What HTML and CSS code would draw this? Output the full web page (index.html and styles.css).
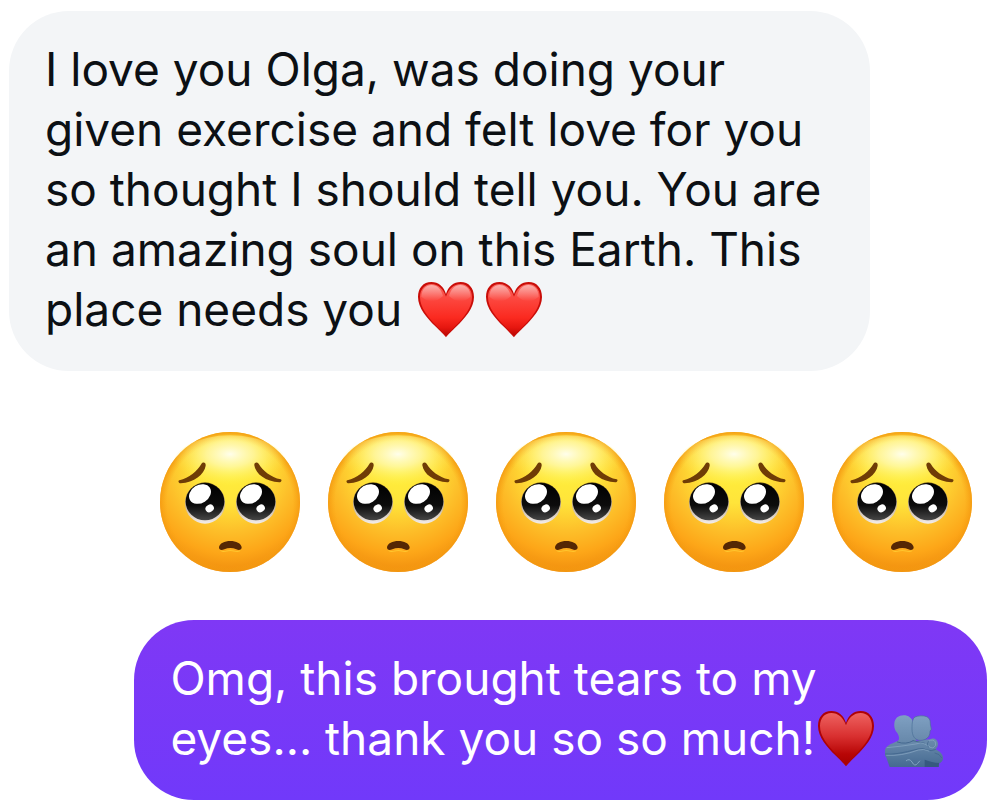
FILE: index.html
```html
<!DOCTYPE html>
<html lang="en">

<head>
    <meta charset="UTF-8">
    <meta name="viewport" content="width=device-width, initial-scale=1.0">
    <title>Chat</title>
    <link rel="stylesheet" href="styles.css">
</head>

<body>
    <!-- Shared emoji shapes -->
    <svg class="emoji-defs" aria-hidden="true">
        <defs>
            <linearGradient id="heart-light" x1="0" y1="0" x2="0" y2="1">
                <stop offset="0" stop-color="#f8655e"/>
                <stop offset="0.3" stop-color="#fc463e"/>
                <stop offset="0.65" stop-color="#fb2a20"/>
                <stop offset="0.85" stop-color="#e5160f"/>
                <stop offset="1" stop-color="#b80603"/>
            </linearGradient>
            <linearGradient id="heart-shine" x1="0" y1="0" x2="0" y2="1">
                <stop offset="0" stop-color="#fff" stop-opacity="0.5"/>
                <stop offset="1" stop-color="#fff" stop-opacity="0"/>
            </linearGradient>
            <linearGradient id="heart-dark" x1="0" y1="0" x2="0" y2="1">
                <stop offset="0" stop-color="#ee6260"/>
                <stop offset="0.45" stop-color="#d93030"/>
                <stop offset="0.8" stop-color="#b80606"/>
                <stop offset="1" stop-color="#a80000"/>
            </linearGradient>
            <radialGradient id="face-fill" gradientUnits="userSpaceOnUse" cx="240" cy="140" r="320">
                <stop offset="0" stop-color="#fff03c"/>
                <stop offset="0.32" stop-color="#ffe43a"/>
                <stop offset="0.58" stop-color="#fdc02a"/>
                <stop offset="0.8" stop-color="#fda618"/>
                <stop offset="1" stop-color="#ee8a0c"/>
            </radialGradient>
            <radialGradient id="face-edge" gradientUnits="userSpaceOnUse" cx="240" cy="244" r="214">
                <stop offset="0.88" stop-color="#f8a512" stop-opacity="0"/>
                <stop offset="1" stop-color="#f29510" stop-opacity="0.9"/>
            </radialGradient>
            <radialGradient id="face-shine" cy="0.3">
                <stop offset="0" stop-color="#fffff4" stop-opacity="0.95"/>
                <stop offset="0.4" stop-color="#fffcc8" stop-opacity="0.65"/>
                <stop offset="1" stop-color="#fff45a" stop-opacity="0"/>
            </radialGradient>
            <linearGradient id="eye-fill" x1="0" y1="0" x2="0" y2="1">
                <stop offset="0" stop-color="#000"/>
                <stop offset="0.6" stop-color="#0c0c0c"/>
                <stop offset="1" stop-color="#474747"/>
            </linearGradient>
            <linearGradient id="eye-rim" x1="0" y1="0" x2="0" y2="1">
                <stop offset="0" stop-color="#6b5312"/>
                <stop offset="0.5" stop-color="#b8a58a"/>
                <stop offset="1" stop-color="#f3edea"/>
            </linearGradient>
            <linearGradient id="hug-fill" gradientUnits="userSpaceOnUse" x1="0" y1="33" x2="0" y2="188">
                <stop offset="0" stop-color="#7fa0c2"/>
                <stop offset="0.55" stop-color="#6687a9"/>
                <stop offset="1" stop-color="#456a91"/>
            </linearGradient>

            <path id="heart-shape" d="M135 202C130 195 118 184 103 169C78 144 51 114 51 81C51 54 67 36 91 36C112 36 129 50 135 72C141 50 158 36 179 36C203 36 219 54 219 81C219 114 192 144 167 169C152 184 140 195 135 202Z"/>

            <symbol id="heart" viewBox="48 30 174 174">
                <use href="#heart-shape" fill="#c90d08"/>
                <path fill="url(#heart-light)" d="M135 197C127 188 117 179 105 166C81 141 57 113 57 81C57 59 71 42 91 42C112 42 127 57 135 80C143 57 158 42 179 42C199 42 213 59 213 81C213 113 189 141 165 166C153 179 143 188 135 197Z"/>
                <path fill="url(#heart-shine)" d="M61 80C62 57 75 45 92 45C108 45 120 56 126 78Q94 108 61 80Z"/>
                <path fill="url(#heart-shine)" d="M144 78C150 56 162 45 178 45C195 45 208 57 209 80Q176 108 144 78Z"/>
            </symbol>

            <symbol id="heart-red" viewBox="48 30 174 174">
                <use href="#heart-shape" fill="#ae0206"/>
                <path fill="url(#heart-dark)" d="M135 196C127 187 117 178 105 165C81 140 57 113 57 81C57 58 71 42 91 42C112 42 127 56 135 79C143 56 158 42 179 42C199 42 213 58 213 81C213 113 189 140 165 165C153 178 143 187 135 196Z"/>
            </symbol>

            <symbol id="pleading" viewBox="30 30 420 420">
                <circle cx="240" cy="240" r="210" fill="url(#face-fill)"/>
                <circle cx="240" cy="240" r="210" fill="url(#face-edge)"/>
                <ellipse cx="240" cy="134" rx="175" ry="94" fill="url(#face-shine)"/>
                <!-- brows -->
                <path fill="#6f3c06" d="M88 175C118 167 141 148 154 126C159 118 168 121 167 131C163 157 132 182 92 184C86 184 83 177 88 175Z"/>
                <path fill="#6f3c06" d="M392 172C362 165 339 147 326 125C321 118 312 121 313 130C317 157 348 179 388 181C394 181 397 174 392 172Z"/>
                <!-- eyes -->
                <ellipse cx="165" cy="243" rx="60" ry="62" fill="url(#eye-rim)"/>
                <ellipse cx="318" cy="243" rx="60" ry="62" fill="url(#eye-rim)"/>
                <ellipse cx="165" cy="239" rx="58" ry="56" fill="url(#eye-fill)"/>
                <ellipse cx="318" cy="239" rx="58" ry="56" fill="url(#eye-fill)"/>
                <ellipse cx="150" cy="216" rx="35" ry="27" fill="#fff" transform="rotate(-32 150 216)"/>
                <ellipse cx="303" cy="216" rx="35" ry="27" fill="#fff" transform="rotate(-32 303 216)"/>
                <ellipse cx="179" cy="259" rx="13" ry="11" fill="#fff" transform="rotate(-30 179 259)"/>
                <ellipse cx="332" cy="259" rx="13" ry="11" fill="#fff" transform="rotate(-30 332 259)"/>
                <!-- mouth -->
                <path fill="#ffc62e" d="M210 383C222 392 228 384 241 384C255 384 262 392 272 383L270 388C260 393 252 387 241 387C228 387 222 394 212 387Z"/>
                <path fill="#552704" d="M207 376C208 364 224 357 241 357C258 357 274 364 275 376C275 384 267 386 259 382C247 377 235 377 223 382C215 386 207 385 207 376Z"/>
            </symbol>

            <symbol id="hug" viewBox="43 14 174 174">
                <!-- person behind -->
                <path fill="url(#hug-fill)" d="M45 132C52 121 66 117 79 111C89 107 85 95 80 86C72 78 70 68 71 58C72 41 84 33 99 33C113 33 124 41 127 54L137 110L181 104C192 99 201 107 202 119C202 127 197 132 194 135C209 142 218 151 217 164C216 171 210 175 206 177L204 188H57L47 160C41 151 40 141 45 132Z"/>
                <path fill="#36597f" d="M162 166C177 171 191 176 205 176L204 188H162Z"/>
                <!-- head in front -->
                <path fill="url(#hug-fill)" stroke="#486e96" stroke-width="2" d="M133 38C143 34 158 33 168 37C179 42 179 52 179 59L182 75L178 80C179 99 165 108 149 108C132 108 124 94 124 74C124 56 125 43 133 38Z"/>
                <!-- arms -->
                <g fill="none" stroke-linecap="round" stroke-linejoin="round">
                    <path stroke="#456990" stroke-width="3" d="M80 113Q106 122 128 109M45 149Q72 153 142 134Q159 130 169 137Q181 141 194 136M127 109Q145 113 162 117"/>
                    <path stroke="#8caac6" stroke-width="2" d="M49 130Q94 126 135 119Q151 112 163 119L177 128M48 153Q92 156 143 137Q158 132 175 140M174 110Q188 103 194 113Q199 125 187 131Q176 131 172 123"/>
                    <path stroke="#3f648b" stroke-width="2" d="M173 111Q166 119 173 128M193 146Q207 148 213 160"/>
                    <path stroke="#83a4c1" stroke-width="3" d="M107 169Q116 161 124 173Q132 189 141 177L147 170"/>
                </g>
            </symbol>
        </defs>
    </svg>

    <main class="chat">
        <!-- Received message -->
        <p class="message received">
            I love you Olga, was doing your given exercise and felt love for you so thought I should tell you. You are an amazing soul on this Earth. This place needs you
            <span class="hearts"><svg class="emoji" role="img" aria-label="red heart"><use href="#heart"/></svg><svg class="emoji" role="img" aria-label="red heart"><use href="#heart"/></svg></span>
        </p>

        <!-- Emoji only reply -->
        <div class="faces">
            <svg class="face" role="img" aria-label="pleading face"><use href="#pleading"/></svg>
            <svg class="face" role="img" aria-label="pleading face"><use href="#pleading"/></svg>
            <svg class="face" role="img" aria-label="pleading face"><use href="#pleading"/></svg>
            <svg class="face" role="img" aria-label="pleading face"><use href="#pleading"/></svg>
            <svg class="face" role="img" aria-label="pleading face"><use href="#pleading"/></svg>
        </div>

        <!-- Sent message -->
        <p class="message sent">
            Omg, this brought tears to my<br>
            eyes... thank you so so much!<svg class="emoji" role="img" aria-label="red heart"><use href="#heart-red"/></svg><svg class="emoji" role="img" aria-label="people hugging"><use href="#hug"/></svg>
        </p>
    </main>
</body>

</html>
```

FILE: styles.css
```css
:root {
    --received-color: #f3f5f7;
    --text-color: #0c1014;
    --bubble-radius: 60px;
}

body {
    margin: 0;
    background-color: #fff;
    color: var(--text-color);
    font-family: Inter, "Liberation Sans", sans-serif;
}

.emoji-defs {
    position: absolute;
    width: 0;
    height: 0;
}

.chat {
    display: flex;
    flex-direction: column;
    padding: 11px 9px;
}

/* Message bubbles */
.message {
    box-sizing: border-box;
    max-width: 88%;
    margin: 0;
    padding: 28px 36px 32px;
    border-radius: var(--bubble-radius);
    font-size: 46px;
    line-height: 60px;
}

.received {
    align-self: flex-start;
    background-color: var(--received-color);
}

.sent {
    align-self: flex-end;
    background: linear-gradient(#7f38f5, #7139fa);
    color: #fff;
}

/* Emoji */
.hearts {
    white-space: nowrap;
}

.emoji {
    width: 58px;
    height: 58px;
    margin: 0 8px 0 2px;
    vertical-align: -12px;
}

.faces {
    display: flex;
    justify-content: flex-end;
    gap: 28px;
    margin: 61px 15px 48px;
}

.face {
    width: 140px;
    height: 140px;
}
```
